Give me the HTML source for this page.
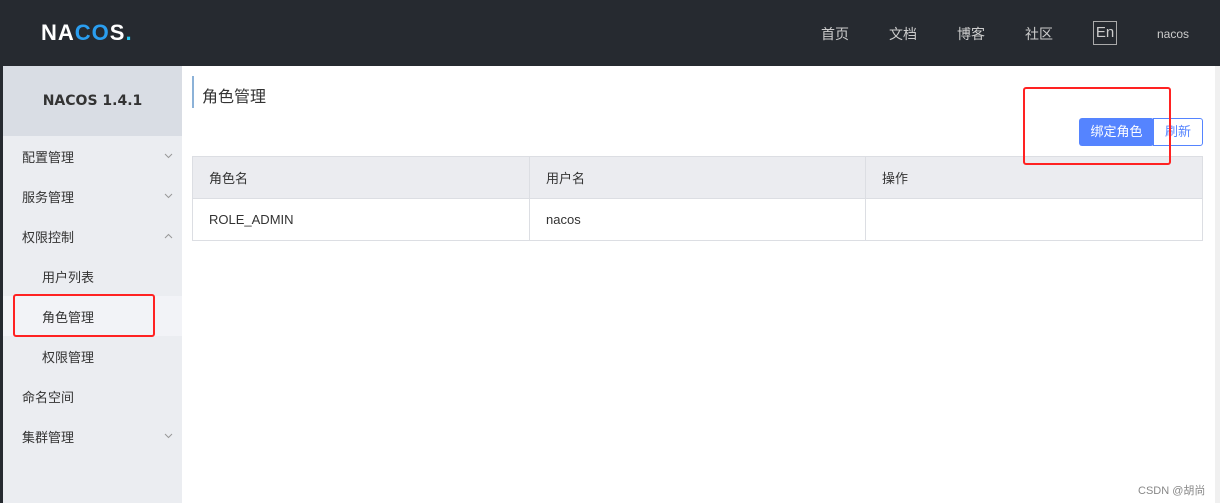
<!DOCTYPE html><html><head><meta charset="utf-8"><style>
*{margin:0;padding:0;box-sizing:border-box}
body{width:1220px;height:503px;overflow:hidden;background:#fff;font-family:"Liberation Sans","Noto Sans CJK SC",sans-serif;position:relative;font-size:13px;color:#333}
.top{position:absolute;left:0;top:0;width:1220px;height:66px;background:#262a30}
.logo{position:absolute;left:41px;top:20px;color:#fff;font-size:22px;font-weight:bold;letter-spacing:1px}
.nav{position:absolute;top:24px;color:#ccc;font-size:14px}
.en{position:absolute;left:1093px;top:21px;width:24px;height:24px;border:1px solid #aaa;color:#ccc;font-size:15px;text-align:center;line-height:21px}
.lstrip{position:absolute;left:0;top:66px;width:3px;height:437px;background:#262a30}
.side{position:absolute;left:3px;top:66px;width:179px;height:437px;background:#ebedf1}
.sh{height:70px;background:#d9dde4;text-align:center;line-height:70px;font-weight:bold;font-size:14px;color:#333;font-family:"DejaVu Sans",sans-serif}
.it{position:absolute;left:0;width:179px;height:40px;line-height:40px;font-size:13px;color:#333}
.arr{position:absolute;right:9px;top:15px}
.rs{position:absolute;left:1215px;top:66px;width:5px;height:437px;background:#f0f0f0}
table{position:absolute;left:192px;top:156px;width:1011px;border-collapse:collapse}
td{border:1px solid #dcdee3;height:42px;padding-left:16px;font-size:13px}
thead td{background:#ebecf0}
.red{position:absolute;border:2px solid #f22;border-radius:3px;z-index:5}
</style></head><body>
<div class="top">
<div class="logo">NA<span style="color:#2a9ef0">CO</span>S<span style="color:#26c6f0">.</span></div>
<div class="nav" style="left:821px">首页</div>
<div class="nav" style="left:889px">文档</div>
<div class="nav" style="left:957px">博客</div>
<div class="nav" style="left:1025px">社区</div>
<div class="en">En</div>
<div class="nav" style="left:1157px;font-size:12px;top:27px">nacos</div>
</div>
<div class="lstrip"></div>
<div class="side">
<div class="sh">NACOS 1.4.1</div>
<div class="it" style="top:72px;padding-left:19px">配置管理<svg class="arr" width="9" height="6"><path d="M1 1L4.5 4.5L8 1" fill="none" stroke="#999"/></svg></div>
<div class="it" style="top:112px;padding-left:19px">服务管理<svg class="arr" width="9" height="6"><path d="M1 1L4.5 4.5L8 1" fill="none" stroke="#999"/></svg></div>
<div class="it" style="top:152px;padding-left:19px">权限控制<svg class="arr" width="9" height="6"><path d="M1 5L4.5 1.5L8 5" fill="none" stroke="#999"/></svg></div>
<div class="it" style="top:192px;padding-left:39px">用户列表</div>
<div class="it" style="top:230px;padding-left:39px;background:#f2f3f7;line-height:44px">角色管理</div>
<div class="it" style="top:272px;padding-left:39px">权限管理</div>
<div class="it" style="top:312px;padding-left:19px">命名空间</div>
<div class="it" style="top:352px;padding-left:19px">集群管理<svg class="arr" width="9" height="6"><path d="M1 1L4.5 4.5L8 1" fill="none" stroke="#999"/></svg></div>
</div>
<div class="red" style="left:13px;top:294px;width:142px;height:43px"></div>
<div style="position:absolute;left:192px;top:76px;width:2px;height:32px;background:#8cb2d8"></div>
<div style="position:absolute;left:202px;top:83px;font-size:16px;color:#333">角色管理</div>
<div style="position:absolute;left:1079px;top:118px;width:75px;height:28px;background:#5584ff;color:#fff;border-radius:3px;text-align:center;line-height:28px">绑定角色</div>
<div style="position:absolute;left:1153px;top:118px;width:50px;height:28px;border:1px solid #5584ff;color:#5584ff;border-radius:0 3px 3px 0;text-align:center;line-height:26px;background:#fff">刷新</div>
<table><thead><tr><td style="width:337px">角色名</td><td style="width:336px">用户名</td><td>操作</td></tr></thead>
<tbody><tr><td>ROLE_ADMIN</td><td>nacos</td><td></td></tr></tbody></table>
<div class="red" style="left:1023px;top:87px;width:148px;height:78px"></div>
<div class="rs"></div>
<div style="position:absolute;left:1138px;top:482px;font-size:11px;color:#888">CSDN @胡尚</div>
</body></html>
